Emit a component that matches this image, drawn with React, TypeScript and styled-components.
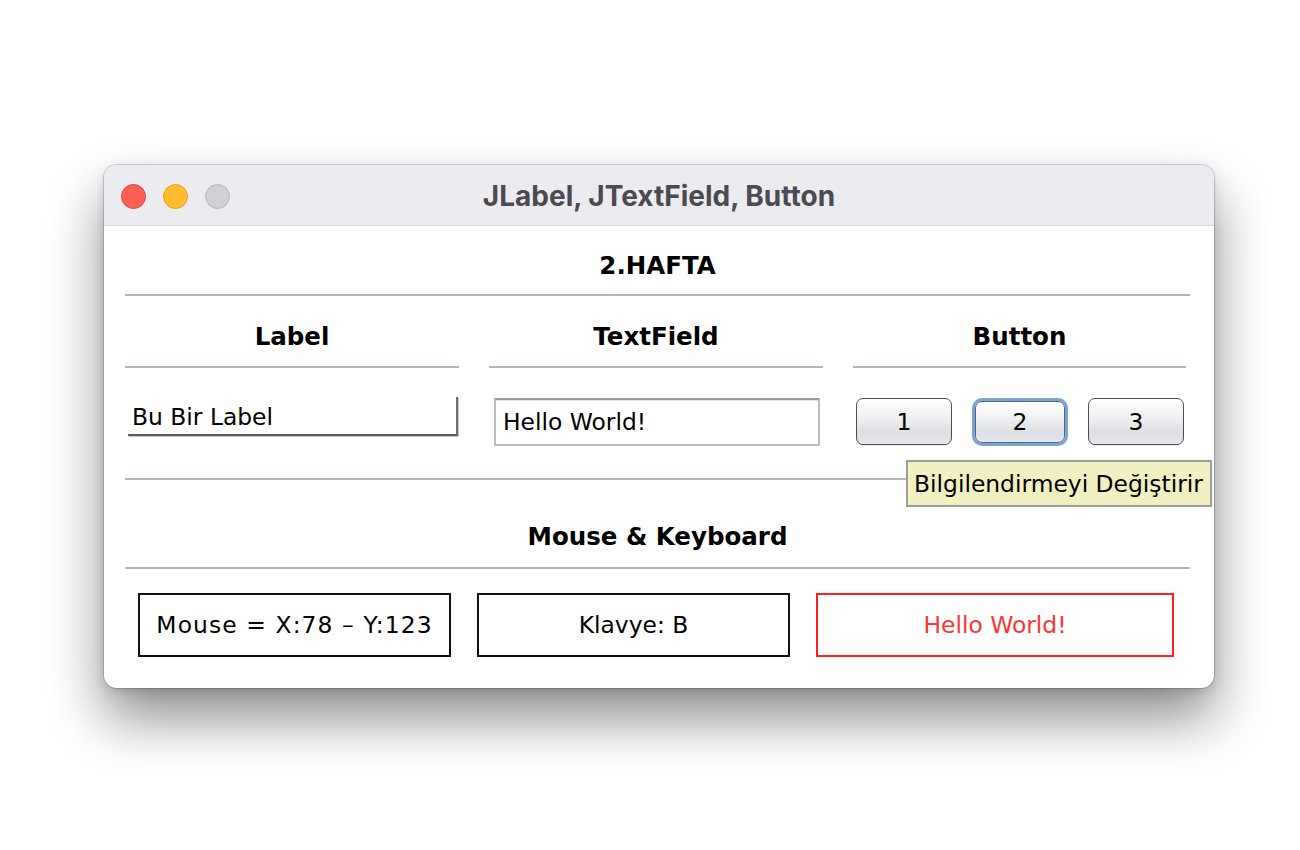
import React from "react";
import styled, { createGlobalStyle } from "styled-components";

const Global = createGlobalStyle`
  html, body { margin: 0; padding: 0; background: #ffffff; }
  body { font-family: "DejaVu Sans", Verdana, sans-serif; }
  * { box-sizing: border-box; }
`;

const Shot = styled.div`
  margin: 100px 20px 0 20px;
  width: 1260px;
  height: 704px;
  overflow: hidden;
  padding: 65px 0 0 84px;
`;

const Window = styled.div`
  position: relative;
  width: 1110px;
  height: 523px;
  border-radius: 13px;
  background: #ffffff;
  box-shadow: 0 0 0 1px rgba(0, 0, 0, 0.16), 0 30px 55px rgba(0, 0, 0, 0.45),
    0 4px 12px rgba(0, 0, 0, 0.12);
`;

const TitleBar = styled.div`
  height: 61px;
  display: grid;
  grid-template-columns: 1fr auto 1fr;
  align-items: center;
  background: #ecebf0;
  border-bottom: 1px solid #d9d8dd;
  border-radius: 13px 13px 0 0;
`;

const Lights = styled.div`
  display: flex;
  gap: 17px;
  padding-top: 2px;
  margin-left: 17px;
`;

const Light = styled.span<{ $bg: string; $bd: string }>`
  width: 25px;
  height: 25px;
  border-radius: 50%;
  background: ${(p) => p.$bg};
  border: 1px solid ${(p) => p.$bd};
`;

const Title = styled.div`
  font-family: Inter, "Liberation Sans", sans-serif;
  font-weight: 700;
  font-size: 28px;
  color: #4b4a50;
  padding-top: 1px;
`;

const Content = styled.div`
  padding: 0 24px 0 21px;
`;

const Heading = styled.div<{ $h: number; $pt: number }>`
  height: ${(p) => p.$h}px;
  padding-top: ${(p) => p.$pt}px;
  display: flex;
  align-items: center;
  justify-content: center;
  font-weight: 700;
  font-size: 24.5px;
  color: #000;
  border-bottom: 2px solid #b4b6bf;
`;

const Grid = styled.div`
  display: grid;
  grid-template-columns: 334px 334px 333px;
  grid-template-rows: 72px 110px;
  column-gap: 30px;
  border-bottom: 2px solid #b4b6bf;
`;

const Cell = styled.div`
  padding-top: 29px;
  display: flex;
  align-items: flex-start;
`;

const LabelBox = styled.div`
  margin-left: 3px;
  width: 330px;
  height: 39px;
  display: flex;
  align-items: center;
  padding-left: 4px;
  padding-top: 2px;
  font-size: 23.4px;
  color: #000;
  border-bottom: 2px solid #5c5c5c;
  border-right: 2px solid #6e6e6e;
  box-shadow: 1px 1px 0 #c8c8c8;
`;

const TextField = styled.div`
  margin-left: 5px;
  margin-top: 1px;
  width: 326px;
  height: 48px;
  display: flex;
  align-items: center;
  padding-left: 7px;
  font-size: 23.4px;
  color: #000;
  border: 2px solid #bdbdbd;
  border-top-color: #9a9a9a;
  box-shadow: inset 0 1px 0 #e4e4e4;
`;

const Buttons = styled.div`
  margin-left: 3px;
  margin-top: 1px;
  display: flex;
  gap: 20px;
`;

const Slot = styled.div`
  width: 96px;
  height: 47px;
  display: flex;
  align-items: center;
  justify-content: center;
`;

const Btn = styled.div<{ $focused?: boolean }>`
  width: ${(p) => (p.$focused ? 90 : 96)}px;
  height: ${(p) => (p.$focused ? 42 : 47)}px;
  border-radius: 7px;
  border: 1.5px solid ${(p) => (p.$focused ? "#5f6670" : "#4e4e50")};
  background: linear-gradient(#ffffff 0%, #f3f3f5 35%, #dedfe3 75%, #e6e7ea 100%);
  box-shadow: ${(p) => (p.$focused ? "0 0 0 3px #78a6da" : "0 1px 0 rgba(0,0,0,0.08)")};
  display: flex;
  align-items: center;
  justify-content: center;
  font-size: 23.4px;
  color: #000;
`;

const Tooltip = styled.div`
  position: absolute;
  left: 802px;
  top: 295px;
  width: 306px;
  height: 47px;
  background: #f1f0c1;
  border: 2px solid #9d9d9d;
  display: flex;
  align-items: center;
  padding-left: 6px;
  font-size: 23.4px;
  color: #000;
  white-space: nowrap;
`;

const BoxRow = styled.div`
  padding: 24px 16px 0 13px;
  display: flex;
  gap: 26px;
`;

const InfoBox = styled.div<{ $w?: number; $red?: boolean; $track?: number }>`
  ${(p) => (p.$w ? `width: ${p.$w}px;` : "flex: 1;")}
  height: 64px;
  display: flex;
  align-items: center;
  justify-content: center;
  font-size: 23.4px;
  letter-spacing: ${(p) => p.$track ?? 0}px;
  color: ${(p) => (p.$red ? "#ff3535" : "#000")};
  border: 2px solid ${(p) => (p.$red ? "#ff1f1f" : "#111")};
  white-space: nowrap;
`;

export default function App() {
  return (
    <>
      <Global />
      <Shot>
        <Window>
          <TitleBar>
            <Lights>
              <Light $bg="#ff5f57" $bd="#e2463f" />
              <Light $bg="#febc2e" $bd="#e1a116" />
              <Light $bg="#d1d0d6" $bd="#b8b7bd" />
            </Lights>
            <Title>JLabel, JTextField, Button</Title>
            <span />
          </TitleBar>
          <Content>
            <Heading $h={70} $pt={10}>2.HAFTA</Heading>
            <Grid>
              <Heading $h={72} $pt={10}>Label</Heading>
              <Heading $h={72} $pt={10}>TextField</Heading>
              <Heading $h={72} $pt={10}>Button</Heading>
              <Cell>
                <LabelBox>Bu Bir Label</LabelBox>
              </Cell>
              <Cell>
                <TextField>Hello World!</TextField>
              </Cell>
              <Cell>
                <Buttons>
                  <Slot><Btn>1</Btn></Slot>
                  <Slot><Btn $focused>2</Btn></Slot>
                  <Slot><Btn>3</Btn></Slot>
                </Buttons>
              </Cell>
            </Grid>
            <Heading $h={89} $pt={26}>Mouse &amp; Keyboard</Heading>
            <BoxRow>
              <InfoBox $w={313} $track={1.1}>Mouse = X:78 – Y:123</InfoBox>
              <InfoBox $w={313}>Klavye: B</InfoBox>
              <InfoBox $red>Hello World!</InfoBox>
            </BoxRow>
          </Content>
          <Tooltip>Bilgilendirmeyi Değiştirir</Tooltip>
        </Window>
      </Shot>
    </>
  );
}
